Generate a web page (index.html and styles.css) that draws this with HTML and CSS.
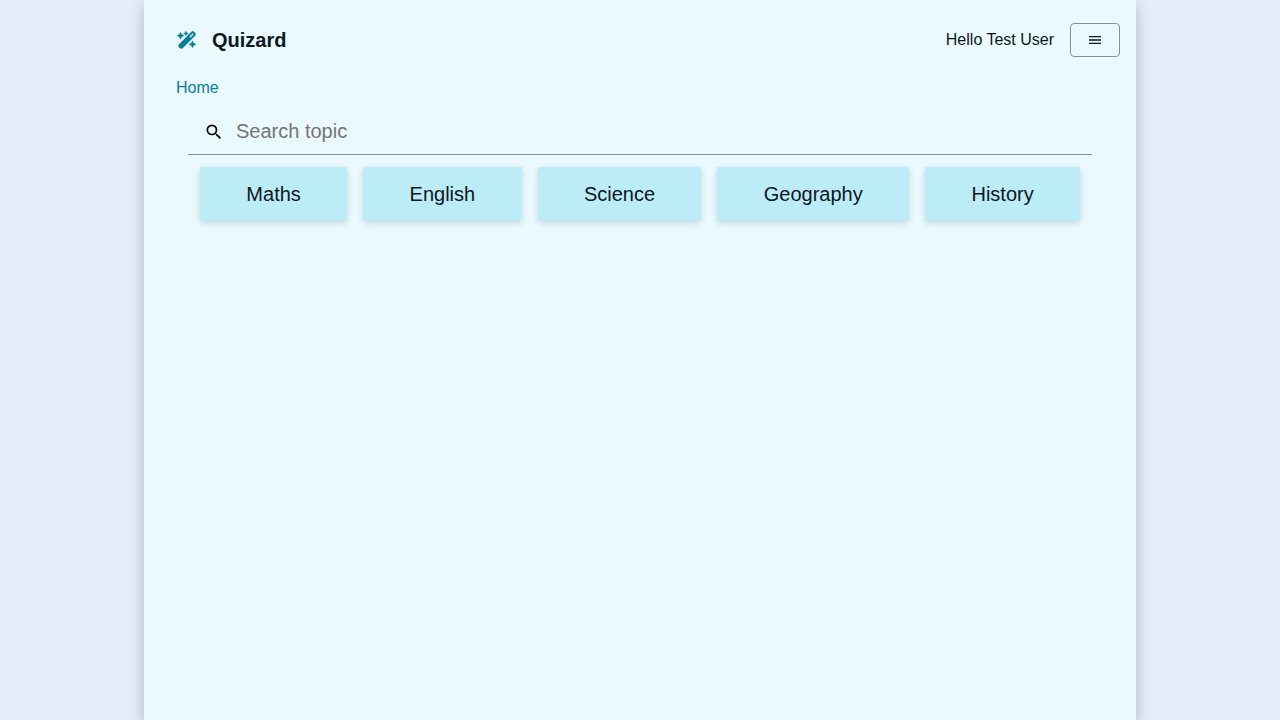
FILE: index.html
```html
<!DOCTYPE html>
<html lang="en">
<head>
<meta charset="utf-8">
<title>Quizard</title>
<link rel="stylesheet" href="styles.css">
</head>
<body>
<div class="app">
  <header class="header">
    <div class="brand">
      <svg class="brand-icon" viewBox="-8 -8 560 528"><path d="M234.7 42.7L197 56.8c-3 1.1-5 4-5 7.2s2 6.1 5 7.2l37.7 14.1L248.8 123c1.1 3 4 5 7.2 5s6.1-2 7.2-5l14.1-37.7L315 71.2c3-1.1 5-4 5-7.2s-2-6.1-5-7.2L277.3 42.7 263.2 5c-1.1-3-4-5-7.2-5s-6.1 2-7.2 5L234.7 42.7zM7.5 117.2C3 118.9 0 123.2 0 128s3 9.1 7.5 10.8L64 160l21.2 56.5c1.7 4.5 6 7.5 10.8 7.5s9.1-3 10.8-7.5L128 160l56.5-21.2c4.5-1.7 7.5-6 7.5-10.8s-3-9.1-7.5-10.8L128 96 106.8 39.5C105.1 35 100.8 32 96 32s-9.1 3-10.8 7.5L64 96 7.5 117.2zM359.5 373.2c-4.5 1.7-7.5 6-7.5 10.8s3 9.1 7.5 10.8L416 416l21.2 56.5c1.7 4.5 6 7.5 10.8 7.5s9.1-3 10.8-7.5L480 416l56.5-21.2c4.5-1.7 7.5-6 7.5-10.8s-3-9.1-7.5-10.8L480 352l-21.2-56.5c-1.7-4.5-6-7.5-10.8-7.5s-9.1 3-10.8 7.5L416 352l-56.5 21.2z"/><path class="wand" d="M46 385c-18.7 18.7-18.7 55 0 74l38 38c18.7 18.7 55 18.7 74 0L530 125c18.7-18.7 18.7-55 0-74L492 14c-18.7-18.7-55-18.7-74 0L46 385zM486 90L385 191l-31-31L455 59z"/></svg>
      <span class="brand-name">Quizard</span>
    </div>
    <div class="user">
      <span>Hello Test User</span>
      <button class="menu-button" aria-label="Menu"><svg class="menu-icon" viewBox="0 0 24 24" fill="currentColor"><path d="M3 18h18v-2H3v2zm0-5h18v-2H3v2zm0-7v2h18V6H3z"/></svg></button>
    </div>
  </header>
  <nav class="breadcrumbs"><a class="crumb" href="#">Home</a></nav>
  <main class="main">
    <label class="search">
      <svg class="search-icon" viewBox="0 0 24 24"><path d="M15.5 14h-.79l-.28-.27A6.471 6.471 0 0 0 16 9.5 6.5 6.5 0 1 0 9.5 16c1.61 0 3.09-.59 4.23-1.57l.27.28v.79l5 4.99L20.49 19l-4.99-5zm-6 0C7.01 14 5 11.99 5 9.5S7.01 5 9.5 5 14 7.01 14 9.5 11.99 14 9.5 14z"/></svg>
      <input class="search-input" type="text" placeholder="Search topic">
    </label>
    <div class="topics">
      <a class="topic">Maths</a>
      <a class="topic">English</a>
      <a class="topic">Science</a>
      <a class="topic">Geography</a>
      <a class="topic">History</a>
    </div>
  </main>
</div>
</body>
</html>
```

FILE: styles.css
```css
* { box-sizing: border-box; }
body {
  margin: 0;
  background: #e5edfd;
  color: #0b1723;
  font: 16px/24px "Liberation Sans", Arial, sans-serif;
}
.app {
  width: 992px;
  min-height: 100vh;
  margin: 0 auto;
  background: #e9f9fd;
  box-shadow: 0 5px 15px rgba(11, 23, 40, 0.25);
}
.header {
  height: 80px;
  padding: 0 16px 0 32px;
  display: flex;
  align-items: center;
  justify-content: space-between;
}
.brand { display: flex; align-items: center; gap: 15px; padding-left: 1px; }
.brand-icon { width: 20px; height: 18px; padding-right: 1px; fill: #077f98; stroke: #077f98; stroke-width: 12; stroke-linejoin: round; }
.wand { stroke-width: 4; fill-rule: evenodd; }
.brand-name { font-size: 20px; font-weight: bold; }
.user { display: flex; align-items: center; gap: 16px; }
.menu-button {
  display: flex;
  padding: 8px 16px;
  border: 1px solid #84939d;
  border-radius: 4px;
  background: transparent;
  color: #0b1723;
}
.menu-icon { width: 16px; height: 16px; }
.breadcrumbs { height: 28px; padding: 0 32px; display: flex; align-items: flex-start; margin-top: -4px; }
.crumb { color: #077f98; text-decoration: none; }
.main { padding: 4px 44px 0; }
.search {
  height: 47px;
  padding: 0 16px;
  display: flex;
  align-items: center;
  gap: 12px;
  border-bottom: 1px solid #84939d;
}
.search-icon { width: 20px; height: 20px; margin-top: 1px; }
.search-input {
  flex: 1;
  padding: 0;
  border: 0;
  outline: 0;
  background: transparent;
  font: inherit;
  font-size: 20px;
}
.topics { display: flex; gap: 16px; padding: 12px; }
.topic {
  flex: 1 1 auto;
  height: 54px;
  border-radius: 2px;
  background: #bcecf6;
  box-shadow: 0 2px 6px rgba(11, 23, 40, 0.15);
  font-size: 20px;
  line-height: 54px;
  text-align: center;
}
```
